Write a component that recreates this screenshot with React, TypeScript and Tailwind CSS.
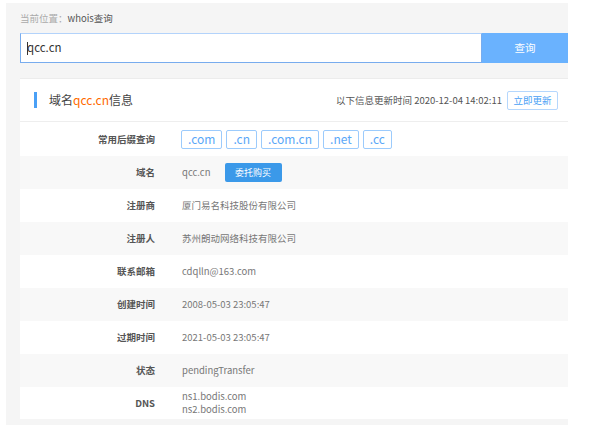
import React from 'react';

const font = { fontFamily: '"Noto Sans CJK SC", "Noto Sans", sans-serif' };

const suffixes = ['.com', '.cn', '.com.cn', '.net', '.cc'];

interface RowProps {
  label: string;
  shaded?: boolean;
  height?: string;
  children: React.ReactNode;
}

const Row: React.FC<RowProps> = ({ label, shaded, height = 'h-[33px]', children }) => (
  <div className={`flex items-center ${height} ${shaded ? 'bg-[#f8f8f8]' : 'bg-white'}`}>
    <div className="w-[135px] text-right text-[9.5px] font-semibold text-[#555]">{label}</div>
    <div className="ml-[27px] flex items-center text-[9.5px] text-[#777]">{children}</div>
  </div>
);

export default function App() {
  return (
    <div className="w-[603px] h-[433px] bg-white pt-[3px] pl-[6px]" style={font}>
      <div className="w-[562px] h-[422px] bg-[#f5f5f5] pl-[14px] flex flex-col">
        {/* breadcrumb */}
        <div className="h-[30px] flex items-center text-[9.5px]">
          <span className="text-[#aaa]">当前位置：</span>
          <span className="text-[#555]">whois查询</span>
        </div>

        {/* search */}
        <div className="flex h-[30px]">
          <div className="flex-1 bg-white border border-[#78acee] border-t-[#b3d3fb] flex items-center pl-[6px] text-[11.5px] text-[#333]">
            <span className="inline-block w-px h-[13px] bg-[#333] mr-[-1px]" />
            qcc.cn
          </div>
          <div className="w-[86px] bg-[#6ab2fe] text-white text-[10.5px] flex items-center justify-center">查询</div>
        </div>

        {/* card */}
        <div className="mt-[15px] bg-white border-t border-[#ececec] flex flex-col">
          <div className="h-[43px] flex items-center border-b border-[#eeeeee] pl-[14px] pr-[10px]">
            <div className="w-[3px] h-[16px] bg-[#4aa0f6]" />
            <div className="ml-[12px] text-[12px] text-[#444]">
              域名<span className="text-[#ff6a00]">qcc.cn</span>信息
            </div>
            <div className="ml-auto flex items-center text-[9.5px] text-[#555]">
              以下信息更新时间 2020-12-04 14:02:11
              <span className="ml-[5px] h-[19px] w-[51px] border border-[#b5d7fd] rounded-[2px] text-[#4a9ff5] flex items-center justify-center">立即更新</span>
            </div>
          </div>

          <Row label="常用后缀查询" height="h-[34px]">
            <div className="flex gap-[4px] -ml-[1px]">
              {suffixes.map(s => (
                <span key={s} className="h-[19px] px-[6px] border border-[#9ccbfc] rounded-[2px] text-[12px] text-[#5aa7f7] flex items-center">{s}</span>
              ))}
            </div>
          </Row>
          <Row label="域名" shaded>
            qcc.cn
            <span className="ml-[14px] h-[19px] w-[57px] bg-[#3b99e9] rounded-[2px] text-white text-[9px] flex items-center justify-center">委托购买</span>
          </Row>
          <Row label="注册商">厦门易名科技股份有限公司</Row>
          <Row label="注册人" shaded>苏州朗动网络科技有限公司</Row>
          <Row label="联系邮箱">cdqlln@163.com</Row>
          <Row label="创建时间" shaded>2008-05-03 23:05:47</Row>
          <Row label="过期时间">2021-05-03 23:05:47</Row>
          <Row label="状态" shaded>pendingTransfer</Row>
          <Row label="DNS" height="h-[32px]">
            <div className="flex flex-col leading-[13px]">
              <span>ns1.bodis.com</span>
              <span>ns2.bodis.com</span>
            </div>
          </Row>
        </div>
      </div>
    </div>
  );
}
